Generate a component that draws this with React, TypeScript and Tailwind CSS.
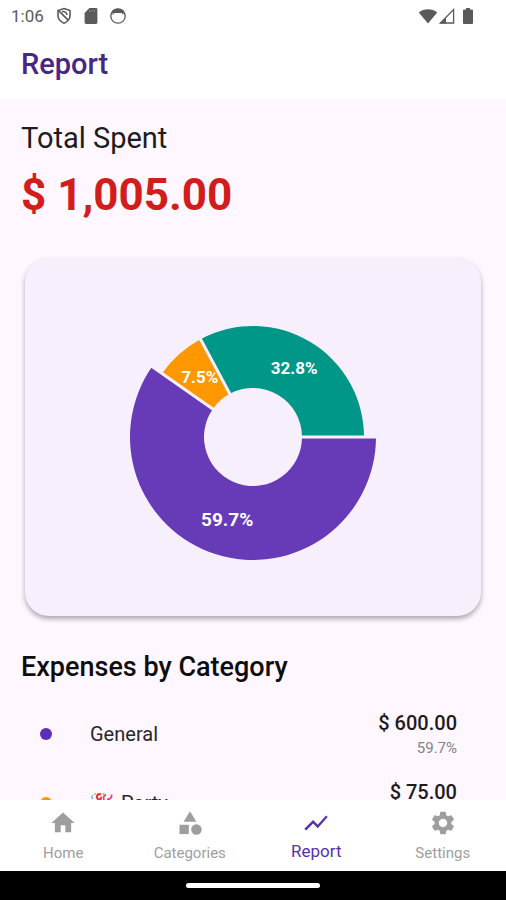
import { MdCategory, MdHome, MdSettings, MdShowChart } from "react-icons/md";
import type { IconType } from "react-icons";

interface Slice {
  label: string;
  value: number;
  color: string;
  outer: number;
  labelRadius: number;
  labelClass: string;
}

const slices: Slice[] = [
  { label: "59.7%", value: 600, color: "#673ab7", outer: 123, labelRadius: 86, labelClass: "text-[19px]" },
  { label: "7.5%", value: 75, color: "#ff9800", outer: 111, labelRadius: 80, labelClass: "text-[17px]" },
  { label: "32.8%", value: 330, color: "#009688", outer: 111, labelRadius: 80, labelClass: "text-[17px]" },
];

const HOLE = 49;
const CENTER = 125;

const point = (radius: number, angle: number) => ({
  x: CENTER + radius * Math.cos(angle),
  y: CENTER + radius * Math.sin(angle),
});

const slicePath = (outer: number, start: number, end: number) => {
  const a = point(outer, start);
  const b = point(outer, end);
  const c = point(HOLE, end);
  const d = point(HOLE, start);
  const large = end - start > Math.PI ? 1 : 0;
  return `M${a.x} ${a.y}A${outer} ${outer} 0 ${large} 1 ${b.x} ${b.y}L${c.x} ${c.y}A${HOLE} ${HOLE} 0 ${large} 0 ${d.x} ${d.y}Z`;
};

const DonutChart = () => {
  const total = slices.reduce((sum, s) => sum + s.value, 0);
  let angle = 0;
  const arcs = slices.map((s) => {
    const start = angle;
    angle += (s.value / total) * Math.PI * 2;
    return { ...s, start, end: angle };
  });

  return (
    <svg viewBox="0 0 250 250" className="h-[250px] w-[250px]" role="img" aria-label="Expenses by category">
      {arcs.map((s) => (
        <path key={s.label} d={slicePath(s.outer, s.start, s.end)} fill={s.color} />
      ))}
      {/* gaps between the slices */}
      {arcs.map((s) => {
        const from = point(HOLE - 3, s.start);
        const to = point(124, s.start);
        return <line key={s.label} x1={from.x} y1={from.y} x2={to.x} y2={to.y} stroke="#f7f0fc" strokeWidth="3" />;
      })}
      {arcs.map((s) => {
        const p = point(s.labelRadius, (s.start + s.end) / 2);
        return (
          <text
            key={s.label}
            x={p.x}
            y={p.y}
            textAnchor="middle"
            dominantBaseline="central"
            fill="#fff"
            className={`font-bold ${s.labelClass}`}
          >
            {s.label}
          </text>
        );
      })}
    </svg>
  );
};

const StatusBar = () => (
  <div className="flex h-8 items-center justify-between bg-white pr-[33px] pl-[11px] text-[#5a5a5a]">
    <div className="flex items-center gap-[11px]">
      <span className="text-[17px] leading-5">1:06</span>
      <svg viewBox="0 0 18 18" className="h-[18px] w-[18px]" fill="none" stroke="currentColor" strokeWidth="1.6">
        <path d="M9 1.6 15 3.6V8.6C15 12.2 12.4 14.8 9 16.4 5.6 14.8 3 12.2 3 8.6V3.6Z" />
        <path d="M3.6 3.6 13.4 13.4M7 4.6C9.6 4 11.6 5.4 12 8" />
      </svg>
      <svg viewBox="0 0 14 16" className="h-4 w-3.5" fill="currentColor">
        <path d="M5.4 0H12a1.4 1.4 0 0 1 1.4 1.4v13.2A1.4 1.4 0 0 1 12 16H2a1.4 1.4 0 0 1-1.4-1.4V5Z" />
        <path d="M5.6 2v2M8 2v2M10.4 2v2" stroke="#888" strokeWidth="1" />
      </svg>
      <svg viewBox="0 0 18 18" className="h-[18px] w-[18px]" fill="none" stroke="currentColor">
        <circle cx="9" cy="9" r="7.2" strokeWidth="1.3" />
        <path d="M3 4.2C5 .8 13 .8 15 4.2L14.2 8 12.6 6H5.4L3.800 8Z" fill="currentColor" stroke="none" />
      </svg>
    </div>
    <div className="flex items-center">
      <svg viewBox="0 0 20 16" className="h-4 w-5" fill="currentColor">
        <path d="M10 15.4.8 4.4C6 .2 14 .2 19.2 4.4Z" />
      </svg>
      <svg viewBox="0 0 16 16" className="ml-px h-4 w-4" fill="none" stroke="currentColor">
        <path d="M14.6 1.6V15H1.4Z" strokeWidth="1.3" />
        <path d="M1 15.4 7 9.6V15.4Z" fill="currentColor" stroke="none" />
      </svg>
      <svg viewBox="0 0 10 16" className="ml-2 h-4 w-2.5" fill="currentColor">
        <path d="M3 0h4v1.600h2a1 1 0 0 1 1 1V15a1 1 0 0 1-1 1H1a1 1 0 0 1-1-1V2.600a1 1 0 0 1 1-1h2Z" />
      </svg>
    </div>
  </div>
);

const PartyIcon = () => (
  <svg viewBox="0 0 24 24" className="h-6 w-6">
    <path d="M1 23 7 9l8 8Z" fill="#fbc02d" />
    <path d="M11 3.500C8 2 6 5 7.500 7.500 9 10 12 8 10.500 6" fill="none" stroke="#e53935" strokeWidth="2.200" />
    <path d="M14 9c-1-3 0-5 2-5M17 8.500c3 0 5-2 4.500-5" fill="none" stroke="#ec407a" strokeWidth="1.800" />
    <path d="M3 4 1.500 6.500 3 8" fill="none" stroke="#64b5f6" strokeWidth="1.200" />
    <circle cx="5" cy="3" r="1" fill="#ffa726" />
    <circle cx="13.500" cy="3" r="1" fill="#ffa726" />
  </svg>
);

interface RowProps {
  name: string;
  amount: string;
  percent: string;
  dotClass: string;
  party?: boolean;
}

const CategoryRow = ({ name, amount, percent, dotClass, party }: RowProps) => (
  <li className="flex h-[69px] items-center pr-7 pl-[19px]">
    <span className={`h-3 w-3 rounded-full ${dotClass}`} />
    <span className="ml-[38px] flex flex-1 items-center gap-[7px] text-[20px] leading-6 text-[#29262c]">
      {party && <PartyIcon />}
      {name}
    </span>
    <span className="flex flex-col items-end">
      <span className="text-[20px] leading-7 font-medium text-[#1d1b20]">{amount}</span>
      <span className="text-[15px] leading-[22px] text-[#858087]">{percent}</span>
    </span>
  </li>
);

interface NavItemProps {
  label: string;
  icon: IconType;
  active?: boolean;
}

const NavItem = ({ label, icon: Icon, active }: NavItemProps) => (
  <button
    type="button"
    aria-current={active ? "page" : undefined}
    className={`flex flex-1 flex-col items-center pt-[9px] ${
      active ? "gap-0.5 text-[17px] text-[#5730ad]" : "gap-1 text-[15px] text-[#9e9e9e]"
    }`}
  >
    <Icon className="h-7 w-7" />
    <span className="leading-6">{label}</span>
  </button>
);

export default function App() {
  return (
    <div className="flex h-screen flex-col overflow-hidden bg-[#fef7ff] font-['Roboto',sans-serif]">
      <StatusBar />
      <header className="flex h-[67px] items-center bg-white px-[21px] pb-1">
        <h1 className="text-[29px] leading-9 font-medium text-[#452785]">Report</h1>
      </header>

      <main className="min-h-0 flex-1 overflow-hidden px-[21px]">
        <section className="pt-[21px]">
          <p className="text-[29px] leading-9 text-[#1d1b20]">Total Spent</p>
          <p className="mt-3 text-[44px] leading-[54px] font-bold text-[#d21d1d]">$ 1,005.00</p>
        </section>

        <div className="mx-1 mt-9 flex h-[358px] items-center justify-center rounded-[24px] bg-[#f7f0fc] shadow-[0_3px_5px_rgba(0,0,0,0.32)]">
          <DonutChart />
        </div>

        <section className="pt-[33px]">
          <h2 className="text-[27px] leading-9 font-medium text-[#0d0c0f]">Expenses by Category</h2>
          <ul className="mt-[14px]">
            <CategoryRow name="General" amount="$ 600.00" percent="59.7%" dotClass="bg-[#5e2fb3]" />
            <CategoryRow name="Party" amount="$ 75.00" percent="7.5%" dotClass="bg-[#ff9800]" party />
          </ul>
        </section>
      </main>

      <nav className="flex h-[71px] bg-white">
        <NavItem label="Home" icon={MdHome} />
        <NavItem label="Categories" icon={MdCategory} />
        <NavItem label="Report" icon={MdShowChart} active />
        <NavItem label="Settings" icon={MdSettings} />
      </nav>
      <div className="flex h-[29px] items-center justify-center bg-black">
        <div className="h-[5px] w-[134px] rounded-full bg-white" />
      </div>
    </div>
  );
}
